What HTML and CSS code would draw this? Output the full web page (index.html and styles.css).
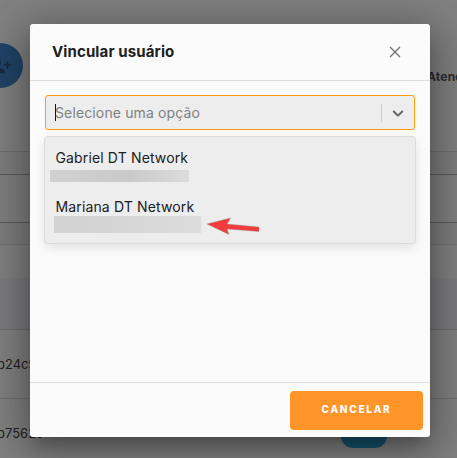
FILE: index.html
```html
<!DOCTYPE html>
<html lang="pt-BR">
<head>
<meta charset="utf-8">
<title>Vincular usuário</title>
<link rel="stylesheet" href="styles.css">
</head>
<body>
<div class="page">
  <header class="top">
    <div class="avatar">
      <svg width="22" height="22" viewBox="0 0 24 24" fill="currentColor"><path d="M8 4a4 4 0 0 1 0 8v-2a2 2 0 0 0 0-4zM0 20v-2c0-2.700 5.300-4 8-4s8 1.300 8 4v2zM18.200 7h1.800v3h3v1.800h-3v3h-1.800v-3h-3v-1.800h3z"/></svg>
    </div>
    <div class="tab">Atendimento</div>
  </header>
  <div class="filter"></div>
  <div class="table">
    <div class="row toolbar"></div>
    <div class="row head"></div>
    <div class="row first">b24c9</div>
    <div class="row second"><span>b7562c</span><span class="pill"></span></div>
  </div>
</div>
<div class="overlay">
  <section class="modal">
    <header class="modal-header">
      <h1>Vincular usuário</h1>
      <svg class="close" width="12" height="12" viewBox="0 0 12 12"><path d="M1 1l10 10M11 1L1 11"/></svg>
    </header>
    <div class="modal-body">
      <div class="select">
        <span class="caret"></span>
        <span class="placeholder">Selecione uma opção</span>
        <span class="separator"></span>
        <svg class="chevron" width="18" height="18" viewBox="0 0 20 20"><path d="M4.516 7.548c0.436-0.446 1.043-0.481 1.576 0l3.908 3.747 3.908-3.747c0.533-0.481 1.141-0.446 1.574 0 0.436 0.445 0.408 1.197 0 1.615-0.406 0.418-4.695 4.502-4.695 4.502-0.217 0.223-0.502 0.335-0.787 0.335s-0.570-0.112-0.789-0.335c0 0-4.287-4.084-4.695-4.502s-0.436-1.170 0-1.615z"/></svg>
      </div>
      <div class="menu">
        <div class="option">Gabriel DT Network</div>
        <div class="mask mask-one"></div>
        <div class="option option-two">Mariana DT Network</div>
        <div class="mask mask-two"></div>
        <svg class="arrow" width="56" height="20" viewBox="0 0 56 20"><path d="M1 7L24.500 1l-3.500 6 32 3v4.500l-32-2.500 2 5.500z"/></svg>
      </div>
    </div>
    <footer class="modal-footer"><button class="cancel">CANCELAR</button></footer>
  </section>
</div>
</body>
</html>
```
FILE: styles.css
```css
* { box-sizing: border-box; }
body {
  margin: 0;
  height: 458px;
  overflow: hidden;
  position: relative;
  font-family: Inter, "Liberation Sans", sans-serif;
  color: #202020;
  background: #7d7d7d;
}
.page { height: 458px; overflow: hidden; }
.top {
  height: 152px;
  display: flex;
  justify-content: space-between;
  background: #808080;
  border-bottom: 1px solid #707070;
}
.avatar {
  width: 45px;
  height: 45px;
  margin: 43px 0 0 -22px;
  border-radius: 50%;
  background: #204366;
  color: #152a40;
  display: flex;
  align-items: center;
  justify-content: center;
}
.avatar svg { flex: none; }
.tab {
  width: 30px;
  margin-top: 69px;
  font-size: 12px;
  line-height: 16px;
  font-weight: 700;
  letter-spacing: .2px;
  color: #2c2c2c;
}
.filter {
  height: 49px;
  margin: 22px -2px 0;
  background: #7f7f7f;
  border: 1px solid #5a5a5a;
}
.table { margin-top: 21px; border-top: 1px solid #727272; }
.row { background: #808080; font-size: 13px; }
.toolbar { height: 33px; }
.head { height: 52px; background: #7b7b7d; border-bottom: 1px solid #6e6e6e; }
.first {
  height: 69px;
  line-height: 69px;
  border-bottom: 1px solid #707070;
  text-indent: -3px;
}
.second {
  height: 70px;
  display: flex;
  line-height: 69px;
  text-indent: -3px;
}
.second span:first-child { width: 341px; }
.pill {
  width: 46px;
  height: 24px;
  margin-top: 25px;
  border-radius: 12px;
  background: #17566f;
}
.overlay {
  position: absolute;
  inset: 0;
  padding: 24px 27px 21px 30px;
}
.modal {
  width: 400px;
  height: 413px;
  display: flex;
  flex-direction: column;
  background: #fbfbfb;
  border-radius: 3px;
  box-shadow: 0 11px 15px -7px rgba(0,0,0,.2), 0 10px 38px 3px rgba(0,0,0,.3), 0 9px 46px 8px rgba(0,0,0,.12);
}
.modal-header {
  height: 57px;
  display: flex;
  align-items: center;
  justify-content: space-between;
  padding: 0 29px 0 22px;
  border-bottom: 1px solid #dcdcdc;
}
h1 {
  margin: 0;
  font-size: 15px;
  line-height: 20px;
  font-weight: 700;
  letter-spacing: .12px;
}
.close { fill: none; stroke: #717171; stroke-width: 1.4; }
.modal-body { flex: 1; padding: 14px 14px 0; }
.select {
  height: 35px;
  margin: 0 1px;
  display: flex;
  align-items: center;
  border: 1px solid #ff9b0a;
  border-radius: 3px;
  background: #ededed;
  padding: 0 7px 0 9px;
}
.caret { width: 1px; height: 17px; background: #111; margin-right: -1px; }
.placeholder {
  flex: 1;
  font-size: 14px;
  letter-spacing: .13px;
  color: #808080;
}
.separator { width: 1px; height: 18px; background: #ccc; margin-right: 7px; }
.chevron { fill: #666; }
.menu {
  position: relative;
  height: 108px;
  margin-top: 6px;
  padding: 12px 5px 0;
  background: #ededed;
  border: 1px solid #dcdcdc;
  border-radius: 4px;
  box-shadow: 0 4px 11px rgba(0,0,0,.1);
}
.option {
  padding-left: 5.5px;
  font-size: 14px;
  line-height: 17px;
  letter-spacing: .14px;
}
.option-two { margin-top: 16px; }
.mask-one {
  width: 139px;
  height: 12px;
  margin-top: 4px;
  background: linear-gradient(90deg, #d2d2d2, #c9c9c9 55%, #dcdcdc);
}
.mask-two {
  width: 147px;
  height: 17px;
  margin: 1px 0 0 4px;
  background: linear-gradient(90deg, #d2d2d2, #d6d6d6 50%, #dcdcdc);
}
.arrow {
  position: absolute;
  left: 161px;
  top: 80px;
  fill: #f23b3b;
  stroke: #909090;
  stroke-width: .4;
}
.modal-footer {
  height: 55px;
  border-top: 1px solid #dcdcdc;
  display: flex;
  justify-content: flex-end;
  padding: 8px 7px;
}
.cancel {
  width: 133px;
  height: 39px;
  border: 0;
  border-radius: 4px;
  background: #ff9529;
  color: #fff;
  font: 800 10px Inter, "Liberation Sans", sans-serif;
  letter-spacing: 1.75px;
  padding: 0 0 3px;
}
```
